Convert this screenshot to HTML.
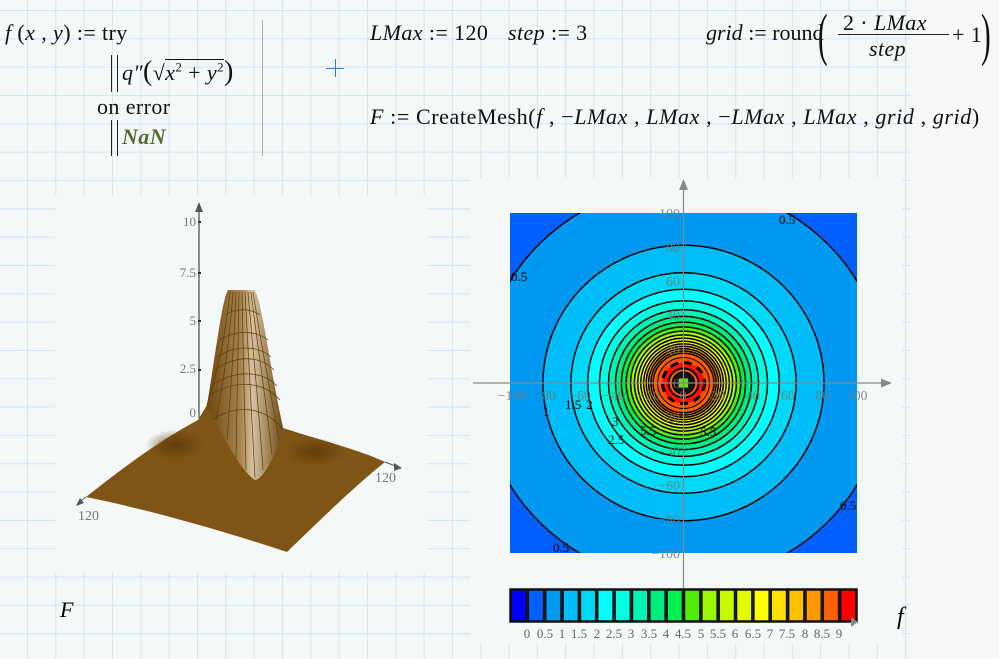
<!DOCTYPE html>
<html><head><meta charset="utf-8"><style>
html,body{margin:0;padding:0;}
body{width:999px;height:659px;position:relative;overflow:hidden;background:#f6f9f8;font-family:"Liberation Serif",serif;}
#grid{position:absolute;left:0;top:0;width:910px;height:659px;background-color:#f4f8f6;
background-image:linear-gradient(to right,#d3e5f3 1px,transparent 1px),linear-gradient(to bottom,#d3e5f3 1px,transparent 1px);
background-size:28.33px 28.33px;background-position:27px 10px;}
.t{position:absolute;font-size:22px;color:#111;white-space:nowrap;line-height:1;letter-spacing:0.4px;}
i{font-style:italic;}
.pl{position:absolute;background:#f4f8f6;}
</style></head><body>
<div id="grid"></div>
<div class="pl" style="left:55px;top:195px;width:372px;height:378px"></div>
<div class="pl" style="left:470px;top:178px;width:432px;height:465px"></div>

<div class="t" style="left:5px;top:22px"><i>f</i> (<i>x</i> , <i>y</i>) := try</div>
<div style="position:absolute;left:111px;top:55px;width:5px;height:37px;border-left:1px solid #222;border-right:1px solid #222"></div>
<div class="t" style="left:122px;top:58px"><i>q″</i><span style="font-size:28px">(</span>√<span style="border-top:1px solid #111"><i>x</i><sup style="font-size:13px">2</sup> + <i>y</i><sup style="font-size:13px">2</sup></span><span style="font-size:28px">)</span></div>
<div class="t" style="left:97px;top:96px">on error</div>
<div style="position:absolute;left:111px;top:120px;width:5px;height:36px;border-left:1px solid #222;border-right:1px solid #222"></div>
<div class="t" style="left:122px;top:126px;color:#556b2f;font-weight:bold;font-style:italic">NaN</div>
<div style="position:absolute;left:262px;top:20px;width:1px;height:136px;background:#aaa"></div>
<div style="position:absolute;left:326px;top:68px;width:18px;height:1px;background:#2a7de1"></div>
<div style="position:absolute;left:335px;top:59px;width:1px;height:18px;background:#2a7de1"></div>

<div class="t" style="left:370px;top:22px"><i>LMax</i> := 120</div>
<div class="t" style="left:508px;top:22px"><i>step</i> := 3</div>
<div class="t" style="left:706px;top:22px;letter-spacing:0">
<i>grid</i> := round</div>
<div class="t" style="left:818px;top:6px;font-size:58px;transform:scaleX(.5);transform-origin:left">(</div>
<div class="t" style="left:843px;top:12px">2 · <i>LMax</i></div>
<div style="position:absolute;left:838px;top:34px;width:111px;height:1px;background:#222"></div>
<div class="t" style="left:869px;top:38px"><i>step</i></div>
<div class="t" style="left:952px;top:24px">+ 1</div>
<div class="t" style="left:981px;top:6px;font-size:58px;transform:scaleX(.5);transform-origin:left">)</div>
<div class="t" style="left:370px;top:106px;letter-spacing:0.6px"><i>F</i> := CreateMesh(<i>f</i> , −<i>LMax</i> , <i>LMax</i> , −<i>LMax</i> , <i>LMax</i> , <i>grid</i> , <i>grid</i>)</div>

<svg style="position:absolute;left:0;top:0" width="999" height="659">
<defs>
<clipPath id="sq"><rect x="510" y="213" width="347" height="340"/></clipPath>
<linearGradient id="pk" x1="0" x2="1" y1="0" y2="0">
<stop offset="0" stop-color="#6e4710"/><stop offset="0.45" stop-color="#a88550"/><stop offset="0.6" stop-color="#d4c2a0"/><stop offset="1" stop-color="#6e4710"/>
</linearGradient>
<radialGradient id="dk1" cx="0.5" cy="0.5" r="0.5"><stop offset="0" stop-color="#5a3808" stop-opacity=".8"/><stop offset="1" stop-color="#5a3808" stop-opacity="0"/></radialGradient>
</defs>
<line x1="199" y1="205" x2="199" y2="418" stroke="#555" stroke-width="1.3"/>
<path d="M195,212 L199,202 L203,212Z" fill="#555"/>
<g fill="#777" font-size="13" font-family="Liberation Serif" text-anchor="end">
<text x="196" y="226">10</text><text x="196" y="277">7.5</text><text x="196" y="325">5</text><text x="196" y="373">2.5</text><text x="196" y="417">0</text></g>
<g fill="#333"><rect x="198" y="221" width="3" height="2"/><rect x="198" y="272" width="3" height="2"/><rect x="198" y="320" width="3" height="2"/><rect x="198" y="369" width="3" height="2"/></g>
<path d="M86,497 C120,470 160,440 198,420 L207,405 C215,360 222,300 228,290 L254,290 C262,300 270,370 283,428 C320,440 360,450 385,462 C350,490 310,530 287,552 C220,530 150,510 86,497 Z" fill="#7f5516"/>
<path d="M207,405 C215,360 222,300 228,290 L254,290 C262,300 270,370 283,428 C275,460 262,480 255,480 C240,470 225,440 207,405Z" fill="url(#pk)"/>
<g stroke="#5e3c0a" stroke-width="0.7" fill="none">
<path d="M230,292 C225,340 215,380 207,405"/><path d="M233,292 C229,350 222,390 216,420"/><path d="M236,292 C234,350 230,400 227,440"/><path d="M239,292 C238,350 237,420 236,458"/><path d="M242,292 C243,350 245,420 246,470"/><path d="M245,292 C248,350 252,420 255,478"/><path d="M248,292 C253,350 259,410 263,470"/><path d="M251,292 C258,350 266,400 272,455"/><path d="M253,292 C262,350 272,400 279,440"/>
<path d="M225,315 C235,308 250,308 260,315"/><path d="M220,340 C235,330 255,330 268,340"/><path d="M217,357 C235,345 258,345 271,357"/><path d="M215,370 C235,355 260,355 274,370"/><path d="M212,385 C235,370 262,370 277,386"/><path d="M210,395 C235,380 262,380 280,400"/><path d="M212,420 C235,405 262,405 282,428"/>
</g>
<ellipse cx="175" cy="445" rx="30" ry="15" fill="url(#dk1)"/>
<ellipse cx="315" cy="452" rx="30" ry="14" fill="url(#dk1)"/>
<line x1="86" y1="497" x2="78" y2="503" stroke="#555"/><path d="M76,506 L80,498 L84,503Z" fill="#555"/>
<line x1="385" y1="462" x2="398" y2="467" stroke="#555"/><path d="M402,468 L394,463 L394,471Z" fill="#555"/>
<text x="78" y="520" fill="#777" font-size="14" font-family="Liberation Serif">120</text>
<text x="375" y="482" fill="#777" font-size="14" font-family="Liberation Serif">120</text>
<text x="60" y="617" font-size="22" font-style="italic" font-family="Liberation Serif">F</text>

<g clip-path="url(#sq)" stroke="#000" stroke-width="1.5">
<rect x="510" y="213" width="347" height="340" fill="#0060ff" stroke="none"/>
<g transform="translate(683.5,383)">
<ellipse rx="202.3" ry="198.2" fill="#0098f0"/>
<ellipse rx="140.5" ry="137.7" fill="#00bcf8"/>
<ellipse rx="112.6" ry="110.3" fill="#00d8f8"/>
<ellipse rx="95.8" ry="93.8" fill="#00ffff"/>
<ellipse rx="84.0" ry="82.3" fill="#00ffe0"/>
<ellipse rx="75.0" ry="73.4" fill="#00f4b8"/>
<ellipse rx="68.0" ry="66.6" fill="#00ec80"/>
<ellipse rx="62.1" ry="60.9" fill="#00f050"/>
<ellipse rx="57.3" ry="56.1" fill="#50ee00"/>
<ellipse rx="52.9" ry="51.9" fill="#98f800"/>
<ellipse rx="49.1" ry="48.1" fill="#c8f800"/>
<ellipse rx="45.8" ry="44.9" fill="#e4fc00"/>
<ellipse rx="42.7" ry="41.8" fill="#ffff00"/>
<ellipse rx="39.9" ry="39.1" fill="#ffe000"/>
<ellipse rx="37.3" ry="36.6" fill="#ffc000"/>
<ellipse rx="34.9" ry="34.2" fill="#ff9800"/>
<ellipse rx="32.6" ry="32.0" fill="#ff7800"/>
<ellipse rx="30.4" ry="29.8" fill="#ff6000"/>
<ellipse rx="26" ry="25.5" fill="#ff5000" stroke-width="1"/>
<ellipse rx="21" ry="20.5" fill="#ff1000" stroke-width="3" stroke-dasharray="8 6"/>
<ellipse rx="15" ry="14.5" fill="#ff6000" stroke-width="2"/>
<ellipse rx="11" ry="11" fill="#111"/>
<rect x="-5" y="-5" width="10" height="10" fill="#66dd22" stroke="#222" stroke-width="1"/>
</g></g>
<g stroke="#888" stroke-width="1.2">
<line x1="683.5" y1="182" x2="683.5" y2="590"/><line x1="473" y1="383" x2="888" y2="383"/></g>
<path d="M679,190 L683.5,179 L688,190Z" fill="#888"/><path d="M881,378.5 L892,383 L881,387.5Z" fill="#888"/>
<g fill="#777" font-size="14" font-family="Liberation Serif" fill-opacity="0.85">
<g text-anchor="end"><text x="680" y="218">100</text><text x="680" y="252">80</text><text x="680" y="286">60</text><text x="680" y="320">40</text><text x="680" y="354">20</text><text x="680" y="388">0</text><text x="680" y="422">−20</text><text x="680" y="456">−40</text><text x="680" y="490">−60</text><text x="680" y="524">−80</text><text x="680" y="558">−100</text></g>
<g text-anchor="middle"><text x="512" y="400">−100</text><text x="545" y="400">−80</text><text x="580" y="400">−60</text><text x="614" y="400">−40</text><text x="649" y="400">−20</text><text x="683" y="400">0</text><text x="718" y="400">20</text><text x="753" y="400">40</text><text x="788" y="400">60</text><text x="822" y="400">80</text><text x="857" y="400">100</text></g>
</g>
<g font-size="13" font-family="Liberation Serif" fill="#000">
<text x="779" y="224">0.5</text><text x="511" y="281">0.5</text><text x="840" y="510">0.5</text><text x="553" y="552">0.5</text>
<text x="543" y="416">1</text><text x="565" y="409">1.5</text><text x="586" y="409">2</text><text x="608" y="444">2.5</text><text x="612" y="426">3</text><text x="640" y="435">5.5</text><text x="700" y="436">5.5</text>
</g>
<g stroke="#111" stroke-width="1.5">
<rect x="510" y="589" width="347" height="33" fill="#222"/>
<g transform="translate(511,590)">
<rect x="0" width="15.3" height="31" fill="#0000ff"/><rect x="17.35" width="15.3" height="31" fill="#0060ff"/><rect x="34.7" width="15.3" height="31" fill="#0098f0"/><rect x="52.05" width="15.3" height="31" fill="#00bcf8"/><rect x="69.4" width="15.3" height="31" fill="#00d8f8"/><rect x="86.75" width="15.3" height="31" fill="#00ffff"/><rect x="104.1" width="15.3" height="31" fill="#00ffe0"/><rect x="121.45" width="15.3" height="31" fill="#00f4b8"/><rect x="138.8" width="15.3" height="31" fill="#00ec80"/><rect x="156.15" width="15.3" height="31" fill="#00f050"/><rect x="173.5" width="15.3" height="31" fill="#50ee00"/><rect x="190.85" width="15.3" height="31" fill="#98f800"/><rect x="208.2" width="15.3" height="31" fill="#c8f800"/><rect x="225.55" width="15.3" height="31" fill="#e4fc00"/><rect x="242.9" width="15.3" height="31" fill="#ffff00"/><rect x="260.25" width="15.3" height="31" fill="#ffe000"/><rect x="277.6" width="15.3" height="31" fill="#ffc000"/><rect x="294.95" width="15.3" height="31" fill="#ff9800"/><rect x="312.3" width="15.3" height="31" fill="#ff6000"/><rect x="329.65" width="15.3" height="31" fill="#ff0000"/>
</g></g>
<path d="M851,617 L858,622 L851,627Z" fill="#888"/>
<g fill="#666" font-size="13" font-family="Liberation Serif" text-anchor="middle">
<text x="527" y="638">0</text><text x="545" y="638">0.5</text><text x="562" y="638">1</text><text x="579" y="638">1.5</text><text x="597" y="638">2</text><text x="614" y="638">2.5</text><text x="631" y="638">3</text><text x="649" y="638">3.5</text><text x="666" y="638">4</text><text x="683" y="638">4.5</text><text x="701" y="638">5</text><text x="718" y="638">5.5</text><text x="735" y="638">6</text><text x="753" y="638">6.5</text><text x="770" y="638">7</text><text x="787" y="638">7.5</text><text x="805" y="638">8</text><text x="822" y="638">8.5</text><text x="839" y="638">9</text>
</g>
<text x="897" y="624" font-size="24" font-style="italic" font-family="Liberation Serif">f</text>
</svg>
</body></html>
